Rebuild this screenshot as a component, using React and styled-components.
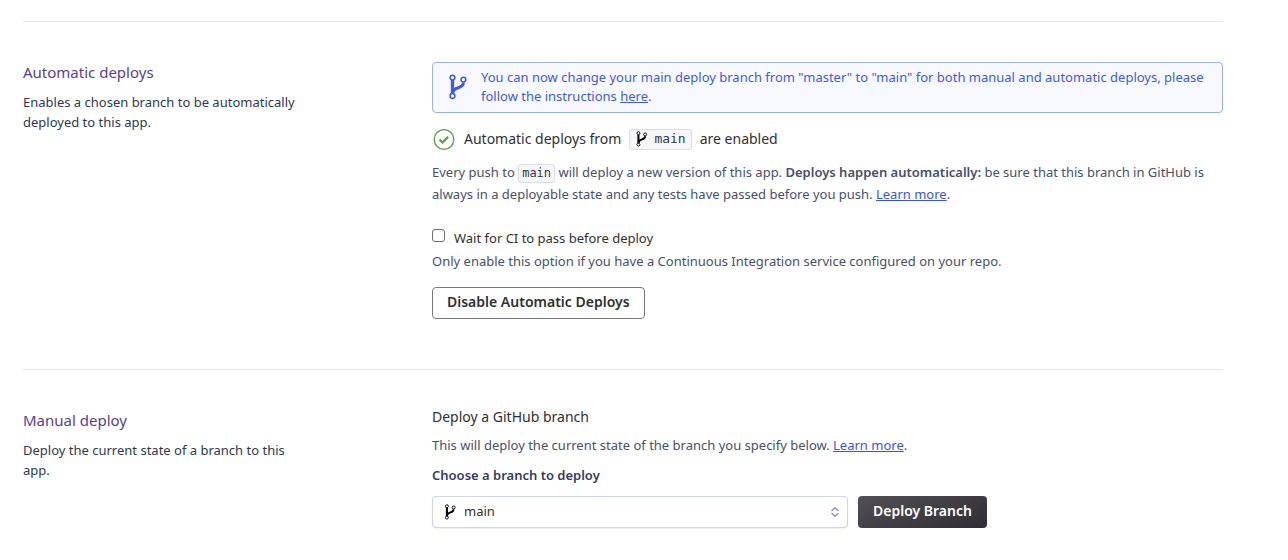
import React from "react";
import styled, { createGlobalStyle } from "styled-components";

const GlobalStyle = createGlobalStyle`
  *, *::before, *::after { box-sizing: border-box; }
  body {
    margin: 0;
    background: #fff;
    color: #3f3f44;
    font-family: "Noto Sans", "Open Sans", sans-serif;
    font-size: 13px;
    line-height: 20px;
  }
  h2, h3, p { margin: 0; font-weight: 400; }
  strong { font-weight: 600; }
`;

const Page = styled.main`
  padding: 21px 65px 0 23px;
`;

const Section = styled.section`
  display: grid;
  grid-template-columns: 290px minmax(0, 1fr);
  column-gap: 119px;
  padding: 40px 0 50px;
  border-top: 1px solid #e3e5ee;
  &:last-child { padding-bottom: 24px; }
`;

const Title = styled.h2`
  color: #5a4189;
  font-size: 15px;
  line-height: 20px;
  margin-bottom: 10px;
`;

const Description = styled.p`
  color: #30374f;
`;

const Content = styled.div`
  display: flex;
  flex-direction: column;
  align-items: flex-start;
`;

const Link = styled.a`
  color: ${(p) => (p.$inherit ? "inherit" : "#3a54db")};
  text-decoration: underline;
  text-underline-offset: 1px;
`;

const Banner = styled.div`
  display: flex;
  align-items: center;
  gap: 14px;
  align-self: stretch;
  padding: 5px 15px 6px;
  border: 1px solid #96b2e9;
  border-radius: 4px;
  background: #f8f9ff;
  color: #3f5ade;
  line-height: 19px;
  svg { flex: none; }
`;

const Status = styled.div`
  display: flex;
  align-items: center;
  gap: 8px;
  margin-top: 15px;
  color: #2f2f33;
  font-size: 14px;
  line-height: 20px;
`;

const Code = styled.code`
  padding: 1px 3px 2px;
  border: 1px solid #dcdce2;
  border-radius: 3px;
  background: #f7f7f9;
  color: #30374f;
  font-family: "DejaVu Sans Mono", "Liberation Mono", monospace;
  font-size: 12px;
  line-height: 16px;
`;

const BranchTag = styled(Code)`
  display: flex;
  align-items: center;
  gap: 6px;
  height: 21px;
  padding: 0 5px;
  font-size: 13px;
  svg { color: #000; }
`;

const Text = styled.p`
  margin-top: ${(p) => p.$gap}px;
  color: #474f6b;
  line-height: 22px;
`;

const CheckLabel = styled.label`
  display: flex;
  align-items: flex-start;
  gap: 9px;
  margin-top: 22px;
  color: #2f2f33;
  line-height: 22px;
`;

const Checkbox = styled.input`
  appearance: none;
  width: 13px;
  height: 13px;
  margin: 2px 0 0;
  border: 1px solid #6b6b70;
  border-radius: 3px;
  background: #fff;
  &:checked { background: #3a54db; }
`;

const Button = styled.button`
  height: 32px;
  padding: 0 ${(p) => (p.$primary ? 15 : 14)}px 3px;
  border: ${(p) => (p.$primary ? "0" : "1px solid #76767b")};
  border-radius: 4px;
  background: ${(p) => (p.$primary ? "linear-gradient(160deg, #525156, #2f2d33)" : "#fff")};
  color: ${(p) => (p.$primary ? "#fff" : "#2f2f33")};
  font: 600 14px/20px "Noto Sans", sans-serif;
  white-space: nowrap;
`;

const Actions = styled.div`
  margin-top: 15px;
  display: flex;
`;

const Subheading = styled.h3`
  color: #2f2f33;
  font-size: 14px;
  line-height: 14px;
`;

const FieldLabel = styled.label`
  margin: 9px 0 11px;
  color: #363d57;
  font-weight: 600;
`;

const DeployRow = styled.div`
  display: flex;
  gap: 10px;
  align-self: stretch;
`;

const SelectBox = styled.div`
  position: relative;
  flex: 0 1 416px;
  svg { position: absolute; top: 0; bottom: 0; margin: auto 0; pointer-events: none; }
  svg:first-child { left: 12px; color: #000; }
  svg:last-child { right: 9px; }
`;

const Select = styled.select`
  appearance: none;
  width: 100%;
  height: 32px;
  padding: 0 30px 2px 31px;
  border: 1px solid #cfd3e6;
  border-radius: 4px;
  background: #fff;
  box-shadow: 0 1px 2px #eceef4;
  color: #2f2f33;
  font: 13px/20px "Noto Sans", sans-serif;
`;

function BranchIcon({ width, height }) {
  return (
    <svg width={width} height={height} viewBox="0 0 19 26" fill="none" stroke="currentColor" aria-hidden="true">
      <path d="M4.500 6v14" strokeWidth="3.400" />
      <path d="M15.400 8.500c0 7-9.500 3.500-10.600 10" strokeWidth="3" />
      <circle cx="4.500" cy="3.600" r="2.400" strokeWidth="1.500" />
      <circle cx="4.500" cy="22" r="2.400" strokeWidth="1.500" />
      <circle cx="15.400" cy="5.600" r="2.400" strokeWidth="1.500" />
    </svg>
  );
}

function CheckIcon() {
  return (
    <svg width="24" height="22" viewBox="0 0 24 22" fill="none" stroke="#5d9c4b" aria-hidden="true">
      <circle cx="12" cy="11.500" r="9.800" strokeWidth="1.300" />
      <path d="M7.500 11.600l3 2.900 5.600-5.600" strokeWidth="2.200" />
    </svg>
  );
}

function SortIcon() {
  return (
    <svg width="8" height="10" viewBox="0 0 8 10" fill="none" stroke="#8a91ab" strokeWidth="1.400" strokeLinecap="round" strokeLinejoin="round" aria-hidden="true">
      <path d="M1 3.500l3-2.700 3 2.700M1 6.500l3 2.700 3-2.700" />
    </svg>
  );
}

export default function App() {
  return (
    <>
      <GlobalStyle />
      <Page>
        <Section>
          <div>
            <Title>Automatic deploys</Title>
            <Description>Enables a chosen branch to be automatically deployed to this app.</Description>
          </div>
          <Content>
            <Banner>
              <BranchIcon width={19} height={26} />
              <p>
                You can now change your main deploy branch from "master" to "main" for both manual and automatic deploys,
                please follow the instructions <Link $inherit href="#instructions">here</Link>.
              </p>
            </Banner>
            <Status>
              <CheckIcon />
              <span>Automatic deploys from</span>
              <BranchTag><BranchIcon width={13} height={16} />main</BranchTag>
              <span>are enabled</span>
            </Status>
            <Text $gap={11}>
              Every push to <Code>main</Code> will deploy a new version of this app.{" "}
              <strong>Deploys happen automatically:</strong> be sure that this branch in GitHub is always in a deployable
              state and any tests have passed before you push. <Link href="#automatic">Learn more</Link>.
            </Text>
            <CheckLabel>
              <Checkbox type="checkbox" />
              Wait for CI to pass before deploy
            </CheckLabel>
            <Text $gap={1}>Only enable this option if you have a Continuous Integration service configured on your repo.</Text>
            <Actions>
              <Button type="button">Disable Automatic Deploys</Button>
            </Actions>
          </Content>
        </Section>
        <Section>
          <div>
            <Title>Manual deploy</Title>
            <Description>Deploy the current state of a branch to this app.</Description>
          </div>
          <Content>
            <Subheading>Deploy a GitHub branch</Subheading>
            <Text $gap={10}>
              This will deploy the current state of the branch you specify below. <Link href="#manual">Learn more</Link>.
            </Text>
            <FieldLabel htmlFor="branch">Choose a branch to deploy</FieldLabel>
            <DeployRow>
              <SelectBox>
                <BranchIcon width={12} height={16} />
                <Select id="branch"><option>main</option></Select>
                <SortIcon />
              </SelectBox>
              <Button type="button" $primary>Deploy Branch</Button>
            </DeployRow>
          </Content>
        </Section>
      </Page>
    </>
  );
}
